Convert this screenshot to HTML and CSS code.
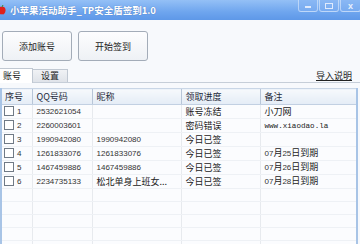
FILE: index.html
```html
<!DOCTYPE html>
<html lang="zh-CN">
<head>
  <meta charset="UTF-8">
  <title>小苹果活动助手</title>
  <link rel="stylesheet" href="styles.css">
</head>
<body>
  <div class="window">
    <div class="titlebar">
      <svg class="appicon" width="8" height="10" viewBox="0 0 8 10">
        <path d="M4 2 C6 1 8 3 7.5 6 C7 9 5 10 4 9 C3 10 1 9 0.5 6 C0 3 2 1 4 2 Z" fill="#e0201c"/>
        <path d="M4 2 L5 0" stroke="#3a8a2a" stroke-width="1"/>
      </svg>
      <span class="title">小苹果活动助手_TP安全盾签到1.0</span>
      <div class="winbtns">
        <span class="winbtn"><i class="min"></i></span>
        <span class="winbtn"><i class="max"></i></span>
        <span class="winbtn close">x</span>
      </div>
    </div>

    <div class="toolbar">
      <button class="btn">添加账号</button>
      <button class="btn">开始签到</button>
    </div>

    <div class="tabs">
      <span class="tab active">账号</span>
      <span class="tab">设置</span>
      <a class="help" href="#">导入说明</a>
    </div>

    <table class="grid">
      <colgroup>
        <col style="width:31px"><col style="width:60px"><col style="width:89px"><col style="width:79px"><col style="width:97px">
      </colgroup>
      <thead>
        <tr><th>序号</th><th>QQ号码</th><th>昵称</th><th>领取进度</th><th>备注</th></tr>
      </thead>
      <tbody>
        <tr><td><span class="chk"></span><span class="num">1</span></td><td class="num">2532621054</td><td></td><td>账号冻结</td><td>小刀网</td></tr>
        <tr><td><span class="chk"></span><span class="num">2</span></td><td class="num">2260003601</td><td></td><td>密码错误</td><td class="mono">www.xiaodao.la</td></tr>
        <tr><td><span class="chk"></span><span class="num">3</span></td><td class="num">1990942080</td><td class="num">1990942080</td><td>今日已签</td><td></td></tr>
        <tr><td><span class="chk"></span><span class="num">4</span></td><td class="num">1261833076</td><td class="num">1261833076</td><td>今日已签</td><td><span class="num">07</span>月<span class="num">25</span>日到期</td></tr>
        <tr><td><span class="chk"></span><span class="num">5</span></td><td class="num">1467459886</td><td class="num">1467459886</td><td>今日已签</td><td><span class="num">07</span>月<span class="num">26</span>日到期</td></tr>
        <tr><td><span class="chk"></span><span class="num">6</span></td><td class="num">2234735133</td><td>松北单身上班女...</td><td>今日已签</td><td><span class="num">07</span>月<span class="num">28</span>日到期</td></tr>
        <tr><td></td><td></td><td></td><td></td><td></td></tr>
        <tr><td></td><td></td><td></td><td></td><td></td></tr>
        <tr><td></td><td></td><td></td><td></td><td></td></tr>
        <tr><td></td><td></td><td></td><td></td><td></td></tr>
        <tr><td></td><td></td><td></td><td></td><td></td></tr>
      </tbody>
    </table>
  </div>
</body>
</html>
```

FILE: styles.css
```css
body {
  margin: 0;
  background: #f6f8fb;
  font-family: "Liberation Sans", "Noto Sans CJK SC", sans-serif;
  color: #222;
}
.window {
  width: 360px;
  height: 244px;
  overflow: hidden;
  background: #f7f9fc;
}
.titlebar {
  height: 20px;
  display: flex;
  align-items: center;
  background: linear-gradient(#94c0f6, #6ea5ee 60%, #5e98e8);
  color: white;
}
.appicon {
  margin-left: -2px;
  margin-right: 4px;
}
.title {
  font-family: "Noto Sans CJK SC", sans-serif;
  font-size: 9.5px;
  font-weight: bold;
  text-shadow: 0 0 1px rgba(30, 70, 140, 0.6);
}
.winbtns {
  margin-left: auto;
  align-self: flex-start;
  display: flex;
}
.winbtn {
  width: 20px;
  height: 12px;
  margin-left: 1px;
  border: 1px solid rgba(255, 255, 255, 0.45);
  border-top: none;
  border-radius: 0 0 3px 3px;
  background: linear-gradient(#8ab8f4, #78abf0);
  display: flex;
  align-items: center;
  justify-content: center;
  box-sizing: border-box;
}
.winbtn .min {
  width: 6px;
  height: 2px;
  background: #dfeafc;
  margin-top: 3px;
}
.winbtn .max {
  width: 6px;
  height: 4px;
  border: 1px solid #dfeafc;
}
.winbtn.close {
  width: 21px;
  margin-right: -1px;
  font-size: 9px;
  font-weight: bold;
  color: #e8f0fc;
  line-height: 10px;
}
.toolbar {
  display: flex;
  gap: 6px;
  padding: 11px 0 0 2px;
}
.btn {
  width: 70px;
  height: 30px;
  border: 1px solid #a3acb8;
  border-radius: 3px;
  background: linear-gradient(#fdfdfe, #eef1f5);
  font-family: "Noto Sans CJK SC", sans-serif;
  font-size: 9px;
  color: #222;
  padding: 0;
}
.tabs {
  display: flex;
  align-items: flex-end;
  margin-top: 6px;
  border-bottom: 1px solid #c6ced8;
  height: 15px;
}
.tab {
  font-family: "Noto Sans CJK SC", sans-serif;
  font-size: 9px;
  height: 12px;
  line-height: 12px;
  padding: 0 8px;
  background: linear-gradient(#f0f2f5, #dfe3e9);
  border: 1px solid #c0c8d2;
  border-bottom: none;
  margin-left: -1px;
}
.tab.active {
  height: 14px;
  line-height: 14px;
  padding: 0 6px 0 3px;
  width: 23px;
  margin-left: 0;
  background: #ffffff;
  border-left: none;
  margin-bottom: -1px;
  position: relative;
}
.help {
  margin-left: auto;
  margin-right: 8px;
  margin-bottom: 1px;
  font-family: "Noto Sans CJK SC", sans-serif;
  font-size: 9px;
  color: #222;
  line-height: 11px;
}
.grid {
  margin-top: 5px;
  width: 358px;
  table-layout: fixed;
  border-collapse: collapse;
  border-left: 2px solid #a8c4e6;
  border-right: 2px solid #a8c4e6;
  background: #fbfcfe;
  font-size: 9px;
}
.grid th {
  height: 15px;
  padding: 0 0 0 4px;
  text-align: left;
  font-family: "Noto Sans CJK SC", sans-serif;
  font-weight: normal;
  font-size: 9px;
  color: #1e2a3a;
  background: linear-gradient(#f6f9fc, #e4ecf6);
  border-top: 1px solid #c9d6e6;
  border-bottom: 1px solid #c2d0e2;
  border-left: 1px solid #b8c6d8;
}
.grid th:first-child {
  border-left: none;
  padding-left: 3px;
}
.grid td {
  height: 12px;
  padding: 0 0 0 4px;
  line-height: 12px;
  white-space: nowrap;
  overflow: hidden;
  font-family: "Noto Sans CJK SC", sans-serif;
  color: #222;
  border-bottom: 1px solid #eef1f5;
  border-right: 1px solid #e7eaee;
}
.grid td:first-child {
  padding-left: 2px;
}
.grid td:last-child {
  border-right: none;
}
.grid .num {
  font-family: "Liberation Sans", sans-serif;
  font-size: 8px;
  color: #333;
}
.grid .mono {
  font-family: "Liberation Mono", monospace;
  font-size: 7.6px;
}
.chk {
  display: inline-block;
  width: 8px;
  height: 8px;
  border: 1px solid #707a86;
  background: #ffffff;
  vertical-align: -2px;
  margin-right: 3px;
}
```
